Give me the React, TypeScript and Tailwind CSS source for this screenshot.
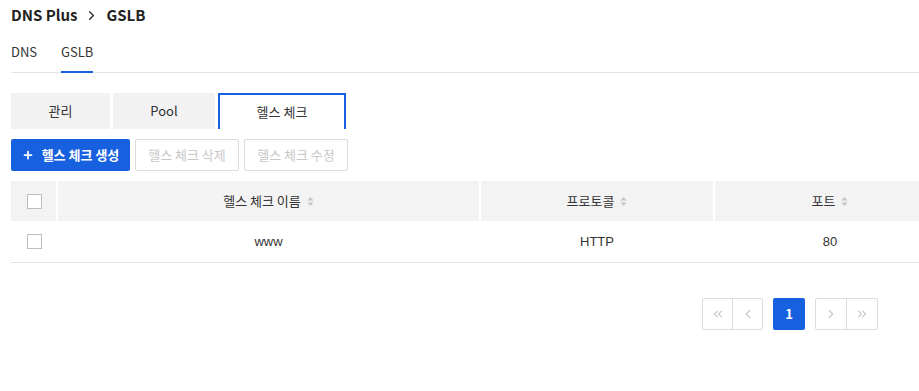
import { ChevronRight, ChevronLeft, ChevronsLeft, ChevronsRight, Plus } from "lucide-react";

const font = { fontFamily: '"Noto Sans CJK KR", "Noto Sans", sans-serif' };
const tableFont = { fontFamily: '"Liberation Sans", "Noto Sans CJK KR", sans-serif' };

function SortIcon() {
  return (
    <svg width="7" height="11" viewBox="0 0 7 11" className="ml-[6px] inline-block">
      <path d="M3.5 1 L6.5 4.5 H0.5 Z" fill="#c4c4c4" />
      <path d="M3.5 10 L6.5 6.5 H0.5 Z" fill="#c4c4c4" />
    </svg>
  );
}

function Checkbox() {
  return <span className="block h-[15px] w-[15px] border border-[#bdbdbd] bg-white" />;
}

export default function App() {
  const columns = [
    { label: "헬스 체크 이름", width: "w-[423px]" },
    { label: "프로토콜", width: "w-[234px]" },
    { label: "포트", width: "w-[230px]" },
  ];

  return (
    <div className="h-[391px] w-[919px] overflow-hidden bg-white pl-[11px] text-[13px] text-[#333]" style={font}>
      <div className="flex h-[30px] items-center gap-[7px] pt-[1px] text-[15px] font-bold text-[#222]">
        <span>DNS Plus</span>
        <ChevronRight size={15} strokeWidth={2.2} className="text-[#333]" />
        <span>GSLB</span>
      </div>

      <div className="mt-[6px] flex h-[37px] gap-[24px] border-b border-[#e5e5e5]">
        <span className="flex items-center pb-[4px] text-[#333]">DNS</span>
        <span className="relative flex items-center pb-[4px] text-[#333]">
          GSLB
          <span className="absolute bottom-[-1px] left-0 h-[2px] w-full bg-[#1761e0]" />
        </span>
      </div>

      <div className="mt-[20px] flex h-[36px] gap-[3px]">
        <div className="flex w-[99px] items-center justify-center bg-[#f2f2f2]">관리</div>
        <div className="flex w-[102px] items-center justify-center bg-[#f2f2f2]">Pool</div>
        <div className="flex w-[128px] items-center justify-center border-2 border-b-0 border-[#1761e0] bg-white">
          헬스 체크
        </div>
      </div>

      <div className="mt-[10px] flex h-[32px] gap-[5px]">
        <button className="flex w-[119px] items-center justify-center gap-[8px] rounded-[2px] bg-[#1761e0] font-bold text-white">
          <Plus size={12} strokeWidth={3.5} />
          헬스 체크 생성
        </button>
        <button className="w-[104px] rounded-[2px] border border-[#dcdcdc] text-[#c8c8c8]">헬스 체크 삭제</button>
        <button className="w-[104px] rounded-[2px] border border-[#dcdcdc] text-[#c8c8c8]">헬스 체크 수정</button>
      </div>

      <div className="mt-[10px] w-[934px]" style={tableFont}>
        <div className="flex h-[40px] bg-[#f3f3f3]" style={font}>
          <div className="flex w-[47px] items-center justify-center border-r-2 border-white pl-[1px]">
            <Checkbox />
          </div>
          {columns.map((col, i) => (
            <div
              key={col.label}
              className={`${col.width} flex items-center justify-center ${i < columns.length - 1 ? "border-r-2 border-white" : ""}`}
            >
              {col.label}
              <SortIcon />
            </div>
          ))}
        </div>
        <div className="flex h-[42px] border-b border-[#e3e3e3]">
          <div className="flex w-[47px] items-center justify-center border-r-2 border-transparent pl-[1px]">
            <Checkbox />
          </div>
          <div className="flex w-[423px] items-center justify-center border-r-2 border-transparent">www</div>
          <div className="flex w-[234px] items-center justify-center border-r-2 border-transparent">HTTP</div>
          <div className="flex w-[230px] items-center justify-center">80</div>
        </div>
      </div>

      <div className="mt-[35px] flex justify-end pr-[41px]">
        <div className="flex h-[32px] rounded-[2px] border border-[#dcdcdc] text-[#c8c8c8]">
          <span className="flex w-[30px] items-center justify-center border-r border-[#dcdcdc]">
            <ChevronsLeft size={14} />
          </span>
          <span className="flex w-[29px] items-center justify-center">
            <ChevronLeft size={14} />
          </span>
        </div>
        <span className="ml-[10px] flex h-[32px] w-[32px] items-center justify-center rounded-[2px] bg-[#1761e0] font-bold text-white">
          1
        </span>
        <div className="ml-[10px] flex h-[32px] rounded-[2px] border border-[#dcdcdc] text-[#c8c8c8]">
          <span className="flex w-[31px] items-center justify-center border-r border-[#dcdcdc]">
            <ChevronRight size={14} />
          </span>
          <span className="flex w-[30px] items-center justify-center">
            <ChevronsRight size={14} />
          </span>
        </div>
      </div>
    </div>
  );
}
